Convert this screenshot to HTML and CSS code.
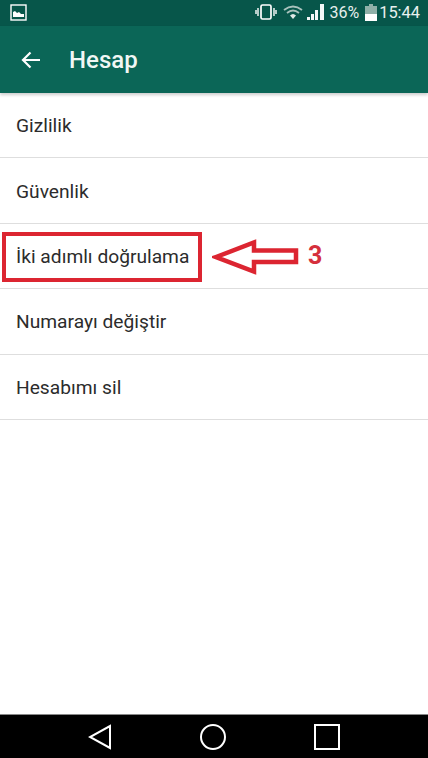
FILE: index.html
```
<!DOCTYPE html>
<html lang="tr">
<head>
<meta charset="utf-8">
<title>Hesap</title>
<link rel="stylesheet" href="styles.css">
</head>
<body>
<div class="screen">
  <div class="status">
    <svg class="pic" width="17" height="17" viewBox="0 0 17 17"><rect x="1" y="1" width="15" height="15" fill="none" stroke="#fff" stroke-width="1.4"/><path d="M3 13V8l2-1 2 2 2-1 2 2 3 0v3z" fill="#fff"/></svg>
    <div class="status-right">
      <svg class="vib" width="22" height="16" viewBox="0 0 22 16"><rect x="6" y="1" width="10" height="14" rx="1.5" fill="none" stroke="#fff" stroke-width="1.7"/><path d="M3 4v8M1 6v4M19 4v8M21 6v4" stroke="#fff" stroke-width="1.4"/></svg>
      <svg class="wifi" width="20" height="15" viewBox="0 0 20 15"><path d="M1 5Q10-2 19 5M4 8Q10 3 16 8" fill="none" stroke="#a9c2bc" stroke-width="1.8"/><path d="M7 10.500Q10 7.500 13 10.500L10 14z" fill="#dfe9e6"/></svg>
      <svg class="sig" width="18" height="17" viewBox="0 0 18 17"><path d="M0 16h3v-3H0zM4 16h3V10H4zM8 16h3V6H8zM13 16h4V0h-4z" fill="#f4f8f7"/></svg>
      <span class="pct">36%</span>
      <svg class="bat" width="12" height="17" viewBox="0 0 12 17"><path d="M4 0h4v2h4v15H0V2h4z" fill="#8fb0a8"/><rect y="10" width="12" height="7" fill="#fff"/></svg>
      <span class="time">15:44</span>
    </div>
  </div>
  <header class="bar">
    <svg class="back" width="20" height="18" viewBox="0 0 20 18"><path d="M19 9H2M9.500 1.500 2 9l7.500 7.500" fill="none" stroke="#fff" stroke-width="2.200"/></svg>
    <h1 class="title">Hesap</h1>
  </header>
  <main class="list">
    <div class="row">Gizlilik</div>
    <div class="row">Güvenlik</div>
    <div class="row">İki adımlı doğrulama</div>
    <div class="row">Numarayı değiştir</div>
    <div class="row">Hesabımı sil</div>
    <div class="callout"></div>
    <svg class="arrow" width="90" height="36" viewBox="0 0 90 36"><path d="M4 18 42 3.500V11.500H84V23H42V32.500z" fill="#fff" stroke="#dc2531" stroke-width="4.500"/></svg>
    <span class="num">3</span>
  </main>
  <nav class="nav">
    <svg width="24" height="26" viewBox="0 0 24 26"><path d="M22 2V24L2 13z" fill="none" stroke="#fff" stroke-width="2"/></svg>
    <svg width="26" height="26" viewBox="0 0 26 26"><circle cx="13" cy="13" r="12" fill="none" stroke="#fff" stroke-width="2"/></svg>
    <svg width="26" height="26" viewBox="0 0 26 26"><rect x="1" y="1" width="24" height="24" fill="none" stroke="#fff" stroke-width="2"/></svg>
  </nav>
</div>
</body>
</html>
```
FILE: styles.css
```
* { box-sizing: border-box; }
html, body { margin: 0; padding: 0; }
.screen {
  width: 428px;
  height: 758px;
  display: flex;
  flex-direction: column;
  font-family: Roboto, "Noto Sans", sans-serif;
  background: #fff;
  overflow: hidden;
}
.status {
  height: 26px;
  background: #07564a;
  display: flex;
  align-items: center;
  justify-content: space-between;
  padding: 0 8px 2px 10px;
  color: #fff;
}
.status-right { display: flex; align-items: center; }
.vib { margin-right: 6px; }
.wifi { margin-right: 4px; }
.sig { margin-right: 4px; }
.pct { font-size: 16px; margin-right: 6px; color: #e6efed; }
.bat { margin-right: 2px; }
.time { font-size: 16.400px; color: #e9f1ef; }
.bar {
  height: 67px;
  background: #0b6657;
  display: flex;
  align-items: center;
  padding: 0 0 0 21px;
  box-shadow: 0 2px 3px rgba(0, 0, 0, 0.2);
  position: relative;
  z-index: 1;
}
.title {
  margin: 0 0 0 28px;
  font-size: 24px;
  font-weight: 500;
  color: #f1f7f5;
}
.list { flex: 1; position: relative; }
.row {
  height: 65.400px;
  padding: 1px 0 0 16px;
  display: flex;
  align-items: center;
  font-size: 19.200px;
  color: #2c2c2c;
  border-bottom: 1px solid #dedede;
}
.callout {
  position: absolute;
  left: 2px;
  top: 139px;
  width: 200px;
  height: 50px;
  border: 4px solid #dc2531;
}
.arrow { position: absolute; left: 212px; top: 146px; }
.num {
  position: absolute;
  left: 308px;
  top: 148px;
  font-size: 25px;
  font-weight: 700;
  color: #d5303c;
}
.nav {
  height: 44px;
  background: #000;
  border-top: 1px solid #888;
  display: flex;
  align-items: center;
  padding-left: 88px;
}
.nav svg:nth-child(2) { margin-left: 88px; }
.nav svg:nth-child(3) { margin-left: 88px; }
```
